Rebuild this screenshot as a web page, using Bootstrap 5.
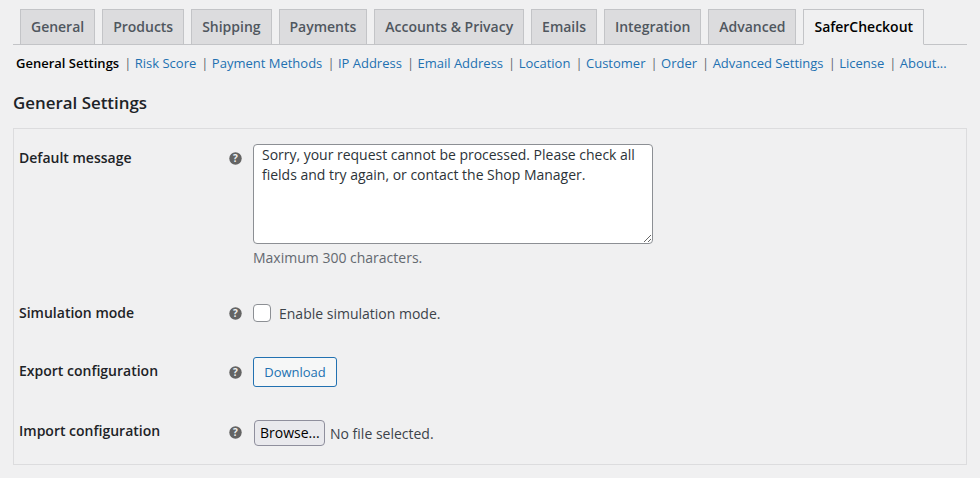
<!DOCTYPE html>
<html lang="en">
<head>
<meta charset="utf-8">
<title>SaferCheckout</title>
<link href="https://cdn.jsdelivr.net/npm/bootstrap@5.3.0/dist/css/bootstrap.min.css" rel="stylesheet">
<style>
html,body{height:478px;overflow:hidden}
body{background:#f0f0f1;color:#3c434a;font-family:"Open Sans",sans-serif;font-size:14px;padding:9px 13px 0}
.tabbar{border-bottom:1px solid #c3c4c7;padding-left:7px;gap:7px;height:36px;flex-wrap:nowrap}
.tabbar .tablink{display:block;height:36px;padding:5px 10px;border:1px solid #c3c4c7;background:#dcdcde;color:#50575e;font-weight:600;font-size:14px;line-height:24px;letter-spacing:-.015px;text-decoration:none;white-space:nowrap}
.tabbar .tablink.current{background:#f0f0f1;color:#000;border-bottom-color:#f0f0f1}
.subbar{margin:8px 0 0;padding:0 0 0 3px;font-size:13px;line-height:20px;color:#646970;white-space:nowrap;list-style:none}
.subbar li{display:inline}
.subbar a{color:#2271b1;text-decoration:none;margin-right:1.7px}
.subbar a.current{color:#000;font-weight:600}
.sectitle{font-size:16.9px;font-weight:600;color:#1d2327;margin:18px 0 14px;line-height:23px}
.formbox{border:1px solid #dcdcde;height:337px;padding:15px 5px 0;margin:0}
.fieldrow{display:flex}
.row-msg{margin-top:0}
.row-sim{margin-top:36px}
.row-exp{margin-top:34px}
.row-imp{margin-top:33px}
.fieldname{width:210px;flex:none;font-weight:600;color:#1d2327;line-height:20px;margin:0}
.row-msg .fieldname{margin-top:4px}
.row-sim .fieldname{margin-top:-1px}
.row-exp .fieldname{margin-top:4px}
.row-imp .fieldname{margin-top:1px}
.tipmark{width:14px;flex:none;margin-right:10px}
.row-msg .tipmark{margin-top:8px}
.row-sim .tipmark{margin-top:3px}
.row-exp .tipmark{margin-top:9px}
.row-imp .tipmark{margin-top:6px}
.tipmark svg{display:block}
.msgbox{display:block;width:400px;height:100px;background:#fff;border:1px solid #8c8f94;border-radius:4px;padding:0 8px;font-size:14px;line-height:19.6px;letter-spacing:-.015px;color:#2c3338;outline:0;font-family:inherit}
.hint{color:#646970;margin:4px 0 0;line-height:20px}
.checkline{height:18px}
.tick{width:18px;height:18px;background:#fff;border:1px solid #8c8f94;border-radius:4px;margin:0 8px 0 0;flex:none;appearance:none}
.dlbtn{font-size:13px;line-height:28px;height:30px;padding:0 10px;color:#2271b1;border:1px solid #2271b1;background:#f6f7f7;border-radius:3px;width:84px}
.browse{font-size:14px;line-height:20px;height:26px;padding:0 5px;width:71px;margin-left:1px;margin-right:5px;background:#e9e9ed;border:1px solid #8f8f9d;border-radius:4px;color:#000}
</style>
</head>
<body>
<nav class="nav tabbar">
<a class="tablink" href="#">General</a>
<a class="tablink" href="#">Products</a>
<a class="tablink" href="#">Shipping</a>
<a class="tablink" href="#">Payments</a>
<a class="tablink" href="#">Accounts &amp; Privacy</a>
<a class="tablink" href="#">Emails</a>
<a class="tablink" href="#">Integration</a>
<a class="tablink" href="#">Advanced</a>
<a class="tablink current" href="#">SaferCheckout</a>
</nav>
<ul class="subbar">
<li><a class="current" href="#">General Settings</a> | </li><li><a href="#">Risk Score</a> | </li><li><a href="#">Payment Methods</a> | </li><li><a href="#">IP Address</a> | </li><li><a href="#">Email Address</a> | </li><li><a href="#">Location</a> | </li><li><a href="#">Customer</a> | </li><li><a href="#">Order</a> | </li><li><a href="#">Advanced Settings</a> | </li><li><a href="#">License</a> | </li><li><a href="#">About...</a></li>
</ul>
<h2 class="sectitle">General Settings</h2>
<div class="formbox">
<div class="fieldrow row-msg">
<label class="fieldname">Default message</label>
<span class="tipmark"><svg width="13" height="13" viewBox="0 0 13 13"><circle cx="6.5" cy="6.5" r="6.2" fill="#646464"/><text x="6.5" y="10" text-anchor="middle" font-size="10" font-weight="700" fill="#f0f0f1" font-family="Open Sans, sans-serif">?</text></svg></span>
<div>
<textarea class="msgbox" rows="4">Sorry, your request cannot be processed. Please check all fields and try again, or contact the Shop Manager.</textarea>
<p class="hint">Maximum 300 characters.</p>
</div>
</div>
<div class="fieldrow row-sim">
<label class="fieldname">Simulation mode</label>
<span class="tipmark"><svg width="13" height="13" viewBox="0 0 13 13"><circle cx="6.5" cy="6.5" r="6.2" fill="#646464"/><text x="6.5" y="10" text-anchor="middle" font-size="10" font-weight="700" fill="#f0f0f1" font-family="Open Sans, sans-serif">?</text></svg></span>
<div class="d-flex align-items-center checkline"><input class="tick" type="checkbox"><span>Enable simulation mode.</span></div>
</div>
<div class="fieldrow row-exp">
<label class="fieldname">Export configuration</label>
<span class="tipmark"><svg width="13" height="13" viewBox="0 0 13 13"><circle cx="6.5" cy="6.5" r="6.2" fill="#646464"/><text x="6.5" y="10" text-anchor="middle" font-size="10" font-weight="700" fill="#f0f0f1" font-family="Open Sans, sans-serif">?</text></svg></span>
<button class="btn dlbtn" type="button">Download</button>
</div>
<div class="fieldrow row-imp">
<label class="fieldname">Import configuration</label>
<span class="tipmark"><svg width="13" height="13" viewBox="0 0 13 13"><circle cx="6.5" cy="6.5" r="6.2" fill="#646464"/><text x="6.5" y="10" text-anchor="middle" font-size="10" font-weight="700" fill="#f0f0f1" font-family="Open Sans, sans-serif">?</text></svg></span>
<div class="d-flex align-items-center"><button class="btn browse" type="button">Browse...</button><span>No file selected.</span></div>
</div>
</div>
</body>
</html>
